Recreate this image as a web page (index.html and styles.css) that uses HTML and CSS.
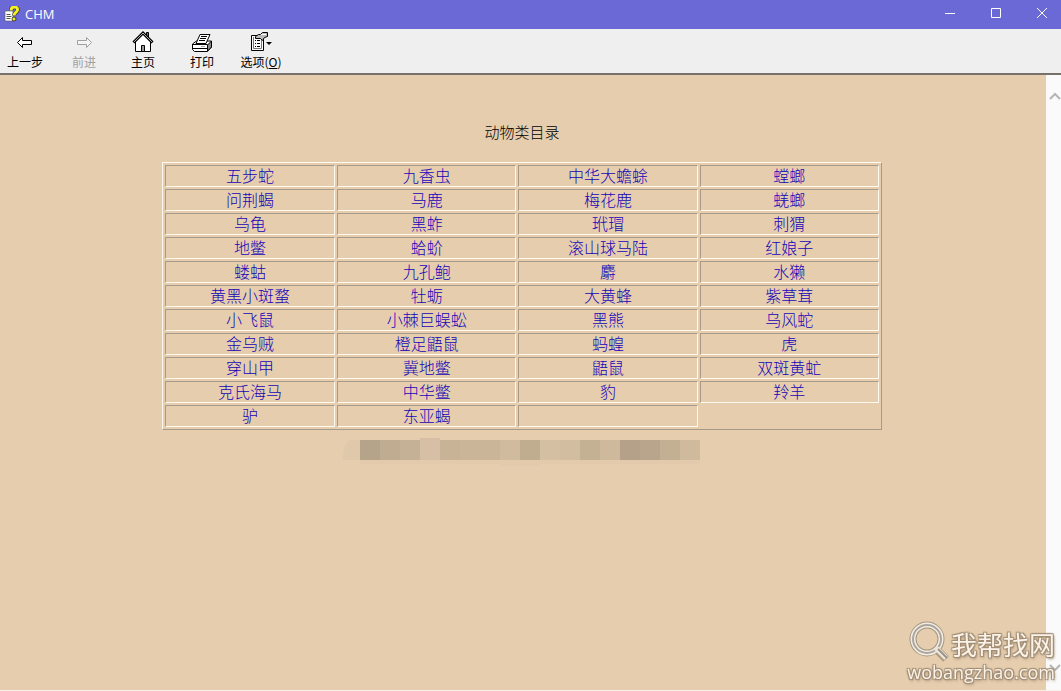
FILE: index.html
```html
<!DOCTYPE html>
<html lang="zh-CN">
<head>
<meta charset="utf-8">
<title>CHM</title>
<link rel="stylesheet" href="styles.css">
</head>
<body>
<header class="titlebar">
  <svg class="app-icon" width="16" height="16" viewBox="0 0 16 16" aria-hidden="true">
    <path d="M1 5h8v10H1z" fill="#fff" stroke="#555" stroke-width=".6"/>
    <path d="M2.500 8.500h4M2.500 10.500h5M2.500 12.500h4" stroke="#555"/>
    <path d="M7 4.500c0-5 7-4.500 6.500-.5-.2 2.500-3.500 2.500-3.500 5.500" fill="none" stroke="#222" stroke-width="4"/>
    <path d="M7 4.500c0-5 7-4.500 6.500-.5-.2 2.500-3.500 2.500-3.500 5.500" fill="none" stroke="#f4f024" stroke-width="3"/>
    <circle cx="10" cy="13" r="2" fill="#f4f024" stroke="#222" stroke-width=".8"/>
  </svg>
  <h1 class="title">CHM</h1>
  <div class="window-controls">
    <button class="window-button" type="button" aria-label="最小化"><svg width="12" height="12"><path d="M1 6.500h10"/></svg></button>
    <button class="window-button" type="button" aria-label="最大化"><svg width="12" height="12"><path d="M1.500 1.500h9v9h-9z"/></svg></button>
    <button class="window-button" type="button" aria-label="关闭"><svg width="12" height="12"><path d="M1 1l10 10M11 1L1 11"/></svg></button>
  </div>
</header>
<nav class="toolbar">
  <button class="tool" type="button">
    <svg width="24" height="24"><path d="M4.500 12.500l5-5v3h9v4h-9v3z" fill="#fff" stroke="#000"/></svg>
    <span>上一步</span>
  </button>
  <button class="tool" type="button" disabled>
    <svg width="24" height="24"><path d="M19.500 12.500l-5-5v3h-9v4h9v3z" fill="#f4f4f4" stroke="#a0a0a0"/></svg>
    <span>前进</span>
  </button>
  <button class="tool" type="button">
    <svg width="24" height="24"><path d="M15.500 2.500h2v6l-2-2z" fill="#777" stroke="#000"/><path d="M4.500 11v10.500h15V11L12 4z" fill="#fff" stroke="#000"/><path d="M2.500 12.500L12 3l9.500 9.500" fill="none" stroke="#000" stroke-width="3"/><path d="M3 12l9-9 9 9" fill="none" stroke="#aaa" stroke-width="1"/><path d="M10.500 21.500v-6h3v6z" fill="#999" stroke="#000"/></svg>
    <span>主页</span>
  </button>
  <button class="tool" type="button">
    <svg width="24" height="24"><path d="M2.500 14l4-3h15v6l-4 4.500h-13l-2-2z" fill="#fff" stroke="#000"/><path d="M17.500 21v-6l4-4v6z" fill="#888" stroke="#000"/><path d="M6 13.500l4-9h10L16 13.500z" fill="#fff" stroke="#000"/><path d="M11 6.500h6M10 8.500h6M9 10.500h6" stroke="#000"/><path d="M2.500 14.500h15M3 18.500h14" stroke="#000"/><path d="M11 16.500h4" stroke="#aaa"/></svg>
    <span>打印</span>
  </button>
  <button class="tool" type="button">
    <svg width="24" height="24"><path d="M2.500 5.500h12v15h-12z" fill="#fff" stroke="#000"/><path d="M4.500 7v11.500h8V8" fill="none" stroke="#777"/><path d="M6 10.500h1M8 10.500h3M6 13.500h1M8 13.500h3M6 16.500h1M8 16.500h3" stroke="#000"/><path d="M6.500 6.500l3-2h2l2-2h5v4l-3 1-2 3-2-2h-5z" fill="#bbb" stroke="#000"/><path d="M12 4.500h5" stroke="#fff"/><path d="M17 12h6l-3 3z" fill="#000"/></svg>
    <span>选项(<u>O</u>)</span>
  </button>
</nav>
<div class="viewer">
  <main class="page">
    <h2 class="heading">动物类目录</h2>
    <table class="catalog">
      <colgroup><col class="col-first"><col><col><col></colgroup>
      <tbody>
        <tr><td><a href="#">五步蛇</a></td><td><a href="#">九香虫</a></td><td><a href="#">中华大蟾蜍</a></td><td><a href="#">螳螂</a></td></tr>
        <tr><td><a href="#">问荆蝎</a></td><td><a href="#">马鹿</a></td><td><a href="#">梅花鹿</a></td><td><a href="#">蜣螂</a></td></tr>
        <tr><td><a href="#">乌龟</a></td><td><a href="#">黑蚱</a></td><td><a href="#">玳瑁</a></td><td><a href="#">刺猬</a></td></tr>
        <tr><td><a href="#">地鳖</a></td><td><a href="#">蛤蚧</a></td><td><a href="#">滚山球马陆</a></td><td><a href="#">红娘子</a></td></tr>
        <tr><td><a href="#">蝼蛄</a></td><td><a href="#">九孔鲍</a></td><td><a href="#">麝</a></td><td><a href="#">水獭</a></td></tr>
        <tr><td><a href="#">黄黑小斑蝥</a></td><td><a href="#">牡蛎</a></td><td><a href="#">大黄蜂</a></td><td><a href="#">紫草茸</a></td></tr>
        <tr><td><a href="#">小飞鼠</a></td><td><a href="#">小棘巨蜈蚣</a></td><td><a href="#">黑熊</a></td><td><a href="#">乌风蛇</a></td></tr>
        <tr><td><a href="#">金乌贼</a></td><td><a href="#">橙足鼯鼠</a></td><td><a href="#">蚂蝗</a></td><td><a href="#">虎</a></td></tr>
        <tr><td><a href="#">穿山甲</a></td><td><a href="#">冀地鳖</a></td><td><a href="#">鼯鼠</a></td><td><a href="#">双斑黄虻</a></td></tr>
        <tr><td><a href="#">克氏海马</a></td><td><a href="#">中华鳖</a></td><td><a href="#">豹</a></td><td><a href="#">羚羊</a></td></tr>
        <tr><td><a href="#">驴</a></td><td><a href="#">东亚蝎</a></td><td></td></tr>
      </tbody>
    </table>
    <svg class="mosaic" width="360" height="28" viewBox="0 0 360 28" aria-hidden="true">
      <path d="M18 2H8Q1 4 1 22h17z" fill="#e0c8aa"/>
      <path d="M18 2h20v20H18z" fill="#b5a489"/>
      <path d="M38 2h20v20H38z" fill="#c0ad91"/>
      <path d="M58 2h20v20H58z" fill="#c5b195"/>
      <path d="M78 0h20v22H78z" fill="#d7bfa5"/>
      <path d="M98 2h20v20H98z" fill="#c8b397"/>
      <path d="M118 2h40v20h-40z" fill="#cab599"/>
      <path d="M158 2h20v20h-20z" fill="#d1bb9e"/>
      <path d="M178 2h20v20h-20z" fill="#c0ad8f"/>
      <path d="M198 2h20v20h-20z" fill="#d5bfa3"/>
      <path d="M218 2h20v20h-20z" fill="#d2bda0"/>
      <path d="M238 2h20v20h-20z" fill="#c4b093"/>
      <path d="M258 2h20v20h-20z" fill="#cfb99c"/>
      <path d="M278 2h20v20h-20z" fill="#b5a18a"/>
      <path d="M298 2h20v20h-20z" fill="#b9a58b"/>
      <path d="M318 2h20v20h-20z" fill="#c3af92"/>
      <path d="M338 2h20v20h-20z" fill="#d0ba9d"/>
      <path d="M18 22h140v4H18zM158 22h40v6h-40zM198 22h160v4H198z" fill="#e3caac"/>
    </svg>
  </main>
  <aside class="scrollbar">
    <svg width="13" height="12" aria-hidden="true"><path d="M2 9l5-5 5 5"/></svg>
    <svg width="13" height="12" aria-hidden="true"><path d="M2 3l5 5 5-5"/></svg>
  </aside>
</div>
<div class="watermark">
  <div class="watermark-top">
    <svg width="42" height="42" aria-hidden="true">
      <path d="M27 28l10 10" stroke="#b19c82" stroke-width="8"/>
      <circle cx="18" cy="18" r="14" fill="none" stroke="#a39684" stroke-width="7"/>
      <circle cx="18" cy="18" r="14" fill="none" stroke="#f5ece0" stroke-width="5"/>
      <circle cx="18" cy="18" r="14" fill="none" stroke="#aaa69f" stroke-width="2"/>
      <path d="M27 27l10 10" stroke="#f0e7db" stroke-width="5"/>
      <path d="M29 28l9 9" stroke="#989489" stroke-width="2"/>
    </svg>
    <span class="watermark-name">我帮找网</span>
  </div>
  <span class="watermark-url">wobangzhao.com</span>
</div>
</body>
</html>
```

FILE: styles.css
```css
* {
  box-sizing: border-box;
}

body {
  display: flex;
  flex-direction: column;
  min-height: 100vh;
  margin: 0;
  background: #e6cdae;
  font-family: "Liberation Sans", "Noto Sans CJK SC", sans-serif;
}

.titlebar {
  display: flex;
  align-items: center;
  height: 29px;
  padding-left: 4px;
  background: #6b69d6;
  color: #fff;
}

.app-icon {
  margin-bottom: 2px;
}

.title {
  flex: 1;
  margin: 0 0 0 5px;
  padding-bottom: 2px;
  font: 400 13px/20px "Open Sans", "Noto Sans", sans-serif;
}

.window-controls {
  display: flex;
  align-self: stretch;
}

.window-button {
  display: flex;
  align-items: center;
  justify-content: center;
  width: 46px;
  padding: 0 0 3px 8px;
  border: 0;
  background: none;
}

.window-button path {
  fill: none;
  stroke: #fff;
  stroke-width: 1;
}

.toolbar {
  display: flex;
  gap: 9px;
  height: 46px;
  background: #f0efef;
  border-bottom: 2px solid #77716a;
}

.tool {
  display: flex;
  flex-direction: column;
  align-items: center;
  width: 50px;
  padding: 1px 0 0;
  border: 0;
  background: none;
  color: #000;
  font: 12px/16px "Noto Sans CJK SC", sans-serif;
  white-space: nowrap;
}

.tool:disabled {
  color: #a0a0a0;
}

.viewer {
  display: flex;
  flex: 1;
  border-bottom: 1px solid #f6f0e9;
}

.page {
  flex: 1;
  display: flex;
  flex-direction: column;
  align-items: center;
  padding: 46px 10px 0 8px;
}

.heading {
  margin: 0 0 19px;
  color: #000;
  font: 300 15px/22px "Noto Sans CJK SC", sans-serif;
}

.catalog {
  width: 70%;
  table-layout: fixed;
  border: 1px solid;
  border-color: #fffaf0 #a89a88 #a89a88 #fffaf0;
  border-spacing: 2px;
  font: 300 16px/16px "Noto Sans CJK SC", sans-serif;
  text-align: center;
}

.col-first {
  width: 24%;
}

.catalog td {
  height: 22px;
  padding: 0 0 3px;
  border: 1px solid;
  border-color: #a89a88 #fffaf0 #fffaf0 #a89a88;
}

.catalog a {
  color: #1405b8;
  text-decoration: none;
}

.mosaic {
  margin-top: 8px;
}

.scrollbar {
  display: flex;
  flex-direction: column;
  justify-content: space-between;
  align-items: flex-end;
  width: 15px;
  padding: 15px 0 16px;
  background: #fafafa;
}

.scrollbar path {
  fill: none;
  stroke: #b4b4b4;
  stroke-width: 2;
}

.watermark {
  position: fixed;
  right: 6px;
  bottom: 10px;
  display: flex;
  flex-direction: column;
  align-items: flex-end;
  color: #fbf3e8;
  text-shadow: 1px 1px 1px #a08c74, -1px -1px 1px #a08c74, 1px -1px 1px #a08c74, -1px 1px 1px #a08c74, 1px 2px 3px #a08c74;
}

.watermark-top {
  display: flex;
  align-items: center;
}

.watermark-name {
  padding-top: 4px;
  font: 26px/32px "Noto Sans CJK SC", sans-serif;
}

.watermark-url {
  font: 18px/18px "Open Sans", "Noto Sans", sans-serif;
}
```
